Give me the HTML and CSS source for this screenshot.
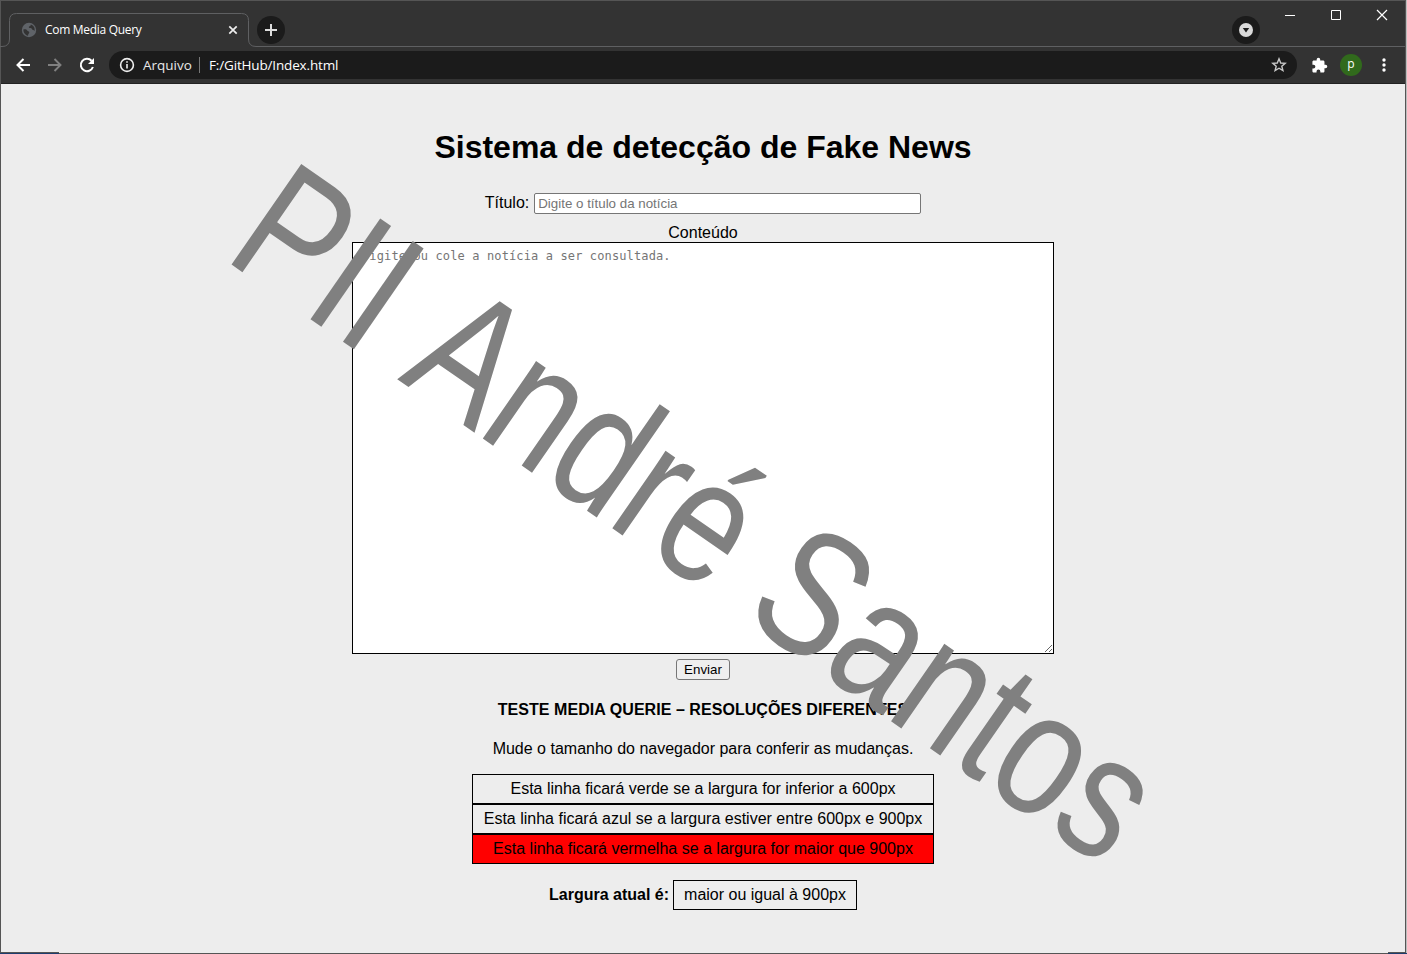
FILE: index.html
```html
<!DOCTYPE html>
<html lang="pt-br">
<head>
<meta charset="utf-8">
<title>Com Media Query</title>
<link rel="stylesheet" href="styles.css">
</head>
<body>
<div class="window">
  <header class="titlebar">
    <svg class="tab-outline" width="1405" height="47" viewBox="0 0 1405 47" fill="none" stroke="#5f6062"><path d="M0 46.500H2Q9.500 46.500 9.500 39V20.500Q9.500 13.500 16.500 13.500H241.500Q248.500 13.500 248.500 20.500V39Q248.500 46.500 256 46.500H1405"/></svg>
    <div class="tab">
      <svg width="16" height="16" viewBox="0 0 16 16"><circle cx="8" cy="8" r="7.200" fill="#5f6368"/><path d="M2.400 7.500C4 6.900 5.700 7.300 6.200 8.400C6.600 9.500 8.300 9 8.300 10.200C8.300 11.500 7 11.400 7 13.700C4.300 13.200 2.300 10.700 2.400 7.500ZM9.800 2.400C10.300 3.500 8.600 4.100 8 4.700C7.300 5.400 8.500 6 9.600 6.100C11 6.300 10.900 7.900 12.200 8.100C13 8.200 13.400 8.700 13.500 9C14.300 6 12.700 3.300 9.800 2.400Z" fill="#333"/></svg>
      <span class="tab-title">Com Media Query</span>
      <svg class="tab-close" width="10" height="10" viewBox="0 0 10 10" stroke="#eee" stroke-width="1.700"><path d="M1.300 1.300L8.700 8.700M8.700 1.300L1.300 8.700"/></svg>
    </div>
    <div class="round"><svg width="28" height="28" viewBox="0 0 28 28" stroke="#ddd" stroke-width="2"><path d="M8 14H20M14 8V20"/></svg></div>
    <div class="round search"><svg width="28" height="28" viewBox="0 0 28 28"><circle cx="14" cy="14" r="7" fill="#dadada"/><path d="M10.800 12H17.200L14 16.500Z" fill="#1b1b1b"/></svg></div>
    <div class="controls">
      <svg width="12" height="12" viewBox="0 0 12 12"><path d="M1 6.500H11" stroke="#fff"/></svg>
      <svg width="12" height="12" viewBox="0 0 12 12"><path d="M1.500 1.500H10.500V10.500H1.500Z" fill="none" stroke="#fff"/></svg>
      <svg width="12" height="12" viewBox="0 0 12 12"><path d="M1 1L11 11M11 1L1 11" stroke="#fff" stroke-width="1.200"/></svg>
    </div>
  </header>
  <nav class="toolbar">
    <svg width="16" height="16" viewBox="0 0 16 16" fill="none" stroke="#fff" stroke-width="2"><path d="M15 8H2.500M8.500 2L2.500 8L8.500 14"/></svg>
    <svg width="16" height="16" viewBox="0 0 16 16" fill="none" stroke="#808080" stroke-width="1.900"><path d="M1 8H13.500M7.500 2L13.500 8L7.500 14"/></svg>
    <svg width="16" height="16" viewBox="0 0 16 16"><path d="M13.900 10A6.200 6.200 0 1 1 12.600 3.800" fill="none" stroke="#fff" stroke-width="2"/><path d="M15 1V7H9Z" fill="#fff"/></svg>
    <div class="address">
      <svg width="16" height="16" viewBox="0 0 16 16" fill="none" stroke="#eee" stroke-width="1.600"><circle cx="8" cy="8" r="6.400"/><path d="M8 7V11.500M8 4.200V5.800"/></svg>
      <span class="scheme">Arquivo</span><span class="rule"></span><span class="url">F:/GitHub/Index.html</span>
      <svg class="star" width="16" height="16" viewBox="0 0 16 16" fill="none" stroke="#c8c8c8" stroke-width="1.400"><path d="M8 1.800L9.700 6L14.200 6.300L10.800 9.200L11.900 13.600L8 11.200L4.100 13.600L5.200 9.200L1.800 6.300L6.300 6Z"/></svg>
    </div>
    <svg class="puzzle" width="17" height="17" viewBox="0 0 24 24" fill="#fff"><path d="M20.500 11H19V7c0-1.100-.9-2-2-2h-4V3.500a2.500 2.500 0 0 0-5 0V5H4c-1.100 0-2 .9-2 2v3.800h1.500a2.700 2.700 0 0 1 0 5.400H2V20c0 1.100.9 2 2 2h3.800v-1.500a2.700 2.700 0 0 1 5.400 0V22H17c1.100 0 2-.9 2-2v-4h1.500a2.500 2.500 0 0 0 0-5z"/></svg>
    <span class="avatar">p</span>
    <svg class="dots" width="4" height="14" viewBox="0 0 4 14" fill="#fff"><circle cx="2" cy="2" r="1.700"/><circle cx="2" cy="7" r="1.700"/><circle cx="2" cy="12" r="1.700"/></svg>
  </nav>
  <main class="page">
    <h1 class="heading">Sistema de detecção de Fake News</h1>
    <div class="field"><label for="titulo">Título:</label><input id="titulo" class="title-input" type="text" placeholder="Digite o título da notícia"></div>
    <label class="content-label" for="conteudo">Conteúdo</label>
    <textarea id="conteudo" class="content-input" placeholder="Digite ou cole a notícia a ser consultada."></textarea>
    <button class="send">Enviar</button>
    <p class="test-title">TESTE MEDIA QUERIE – RESOLUÇÕES DIFERENTES</p>
    <p class="hint">Mude o tamanho do navegador para conferir as mudanças.</p>
    <div class="rows">
      <div class="row">Esta linha ficará verde se a largura for inferior a 600px</div>
      <div class="row">Esta linha ficará azul se a largura estiver entre 600px e 900px</div>
      <div class="row red">Esta linha ficará vermelha se a largura for maior que 900px</div>
    </div>
    <div class="current"><b>Largura atual é:</b><span class="row value">maior ou igual à 900px</span></div>
  </main>
  <svg class="watermark" width="1407" height="954" viewBox="0 0 1407 954"><text transform="translate(222 258) rotate(34.700) scale(1 1.255)">PII André Santos</text></svg>
  <svg class="desktop-edge" width="1407" height="2" viewBox="0 0 1407 2"><path d="M0 0H59V1H0ZM1388 0H1406V1H1388Z" fill="#555"/><path d="M0 1H59V2H0ZM1388 1H1407V2H1388Z" fill="#1d3d6e"/></svg>
</div>
</body>
</html>
```
FILE: styles.css
```css
* { box-sizing: border-box; }
body { margin: 0; overflow: hidden; background: #bdbdbd; font: 16px/18px "Liberation Sans", Arial, sans-serif; color: #000; }
.window { position: relative; width: 1406px; height: 954px; display: flex; flex-direction: column; background: #ededed; border: 1px solid #555; }
.titlebar { height: 46px; display: flex; background: #333; flex: none; font-family: "Open Sans", "Noto Sans", sans-serif; }
.tab-outline { position: absolute; left: -1px; top: -1px; }
.tab { width: 240px; margin-left: 8px; padding: 13px 11px 0 12px; display: flex; align-items: center; height: 45px; }
.tab-title { color: #fff; font-size: 12px; margin-left: 8px; letter-spacing: -0.3px; white-space: nowrap; }
.tab-close { margin-left: auto; }
.round { width: 28px; height: 28px; border-radius: 50%; background: #1b1b1b; margin: 15px 0 0 8px; }
.round.search { margin-left: auto; }
.controls { display: flex; gap: 34px; margin: 8px 17px 0 24px; }
.toolbar { height: 37px; flex: none; display: flex; align-items: center; background: #333; border-bottom: 1px solid #222; padding: 0 20px 0 14px; gap: 16px; font-family: "Open Sans", "Noto Sans", sans-serif; }
.toolbar svg { flex: none; }
.address { flex: none; width: 1188px; height: 28px; margin-left: -2px; padding: 0 10px; border-radius: 14px; background: #1b1b1b; display: flex; align-items: center; font-size: 13.500px; color: #fff; }
.scheme { margin-left: 8px; color: #e8e8e8; width: 49px; }
.rule { width: 1px; height: 16px; background: #777; margin: 0 9px 0 7px; }
.url { letter-spacing: -0.16px; }
.star { margin-left: auto; }
.puzzle { margin-left: -2px; }
.avatar { flex: none; width: 22px; height: 22px; border-radius: 50%; background: #316a1c; color: #fff; font-size: 12px; line-height: 19px; text-align: center; margin-left: -4px; }
.dots { margin-left: 4px; }
.page { display: flex; flex-direction: column; align-items: center; padding-top: 45px; }
.heading { margin: 0; font-size: 32px; line-height: 36px; white-space: nowrap; }
.field { display: flex; gap: 5px; margin-top: 28px; height: 21px; line-height: 20px; }
.title-input { width: 387px; height: 21px; padding: 1px 3px; border: 1px solid #767676; border-radius: 2px; background: #fff; font: 13.333px "Liberation Sans", Arial, sans-serif; }
.content-label { margin-top: 10px; height: 18px; }
.content-input { width: 702px; height: 412px; margin: 0; padding: 5px 9px; border: 1px solid #000; border-radius: 0; background: #fff; resize: both; font: 12px/16px "DejaVu Sans Mono", monospace; letter-spacing: 0.125px; }
::placeholder { color: #757575; opacity: 1; }
.send { width: 54px; height: 21px; margin: 5px 0 0; padding: 0; border: 1px solid #767676; border-radius: 3px; background: #efefef; color: #000; font: 13.333px "Liberation Sans", Arial, sans-serif; }
.test-title { margin: 21px 0 0; font-weight: bold; letter-spacing: 0.050px; }
.hint { margin: 21px 0 0; }
.rows { width: 462px; margin-top: 16px; }
.row { height: 30px; border: 1px solid #000; padding: 5px 10px; text-align: center; white-space: nowrap; }
.red { background: #f00; }
.current { display: flex; gap: 4px; align-items: center; margin-top: 16px; }
.value { width: 184px; }
.watermark { position: absolute; left: -1px; top: -1px; pointer-events: none; }
.watermark text { font: 141.800px "Liberation Sans", Arial, sans-serif; font-kerning: none; fill: #808080; }
.desktop-edge { position: absolute; left: -1px; bottom: -1px; }
```
